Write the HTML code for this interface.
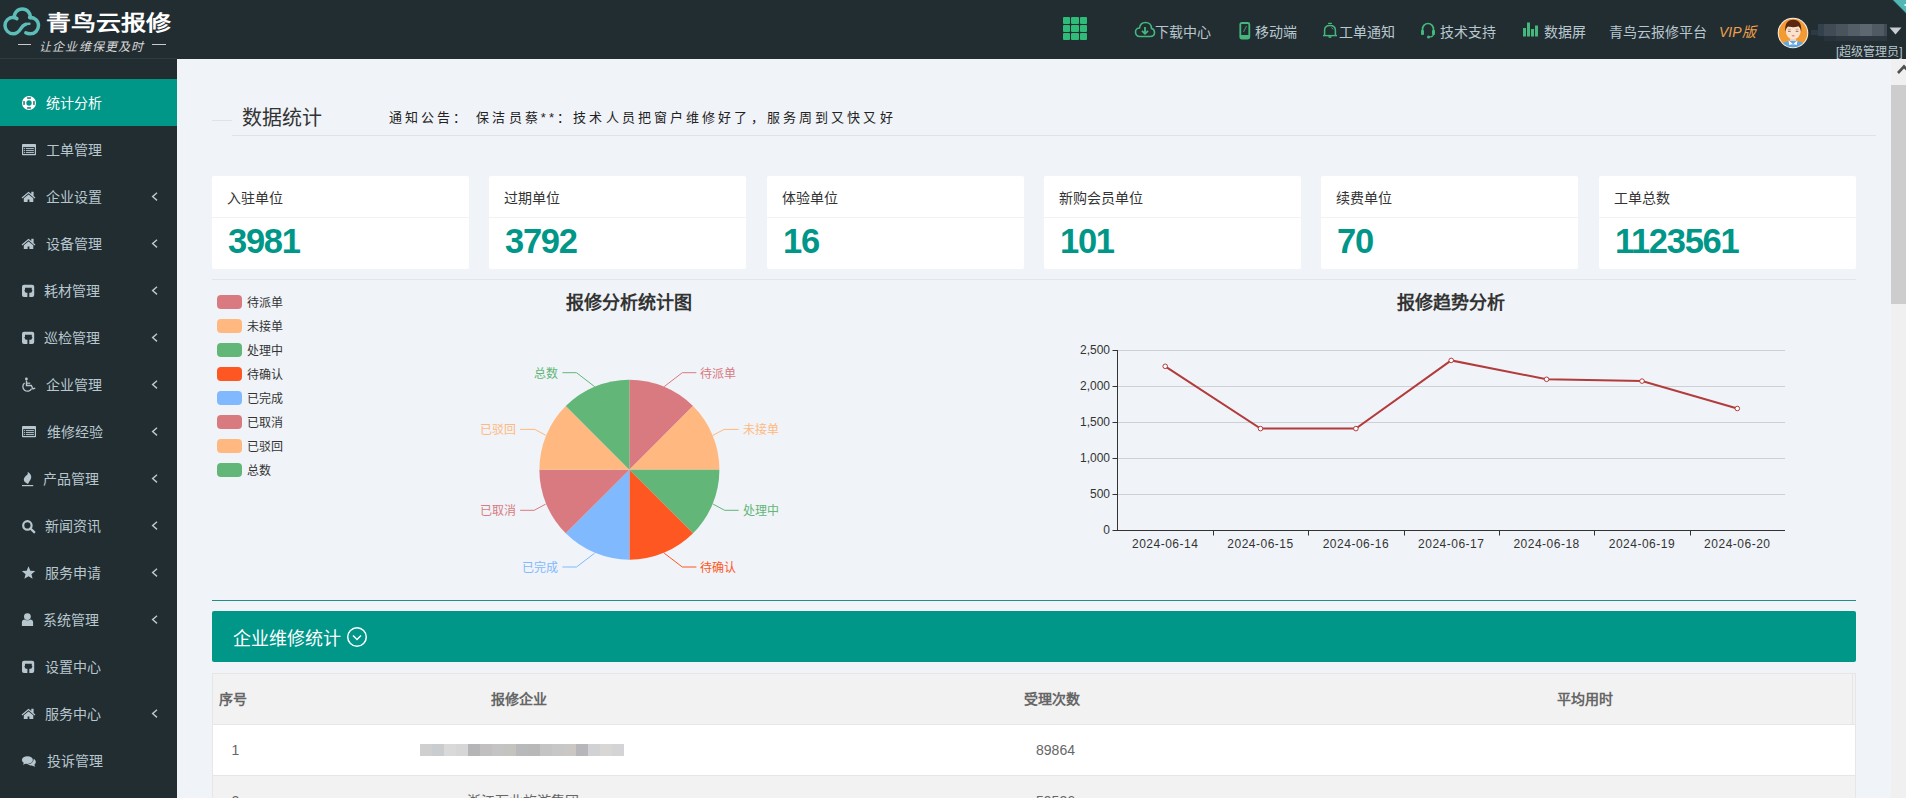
<!DOCTYPE html><html lang="zh-CN"><head><meta charset="utf-8"><style>
*{margin:0;padding:0;box-sizing:border-box}
html,body{width:1906px;height:798px;overflow:hidden;background:#f0f3f8;font-family:"Liberation Sans",sans-serif;}
div,span,svg{position:absolute}
.t{white-space:nowrap}
</style></head><body>
<div style="left:0px;top:0px;width:1906px;height:59px;background:#222d32;"></div>
<div style="left:0px;top:58px;width:177px;height:1px;background:#2f3b42;"></div>
<svg style="left:0;top:0" width="46" height="40" viewBox="0 0 46 40">
<path d="M15 17.4 C 14.5 17.3 13.9 17.2 13.3 17.2 A 8.3 8.3 0 0 0 5 25.5 A 8.3 8.3 0 0 0 13.3 33.8 C 17.5 33.8 19.3 31 20.8 28.6 C 22 26.6 23.5 25 25.5 24.3" fill="none" stroke="#5cbdb9" stroke-width="3.5" stroke-linecap="round"/><path d="M24.5 24.6 C 26 24 27.5 23.8 29.5 23.8" fill="none" stroke="#5cbdb9" stroke-width="2.4" stroke-linecap="round"/>
<path d="M16.9 18.6 C 15.8 18 15 17.9 14.35 17.8 A 8 8 0 1 1 30.25 17.8" fill="none" stroke="#5cbdb9" stroke-width="3.5" stroke-linecap="round"/>
<path d="M29.6 17.4 A 8.3 8.3 0 0 1 38.5 25.6 A 8.2 8.2 0 0 1 30.3 33.8 C 28.5 33.8 27 33.5 25.8 32.8" fill="none" stroke="#5cbdb9" stroke-width="3.5" stroke-linecap="round"/>
</svg>
<div class="t" style="left:46px;top:6.5px;font-size:25px;line-height:30px;color:#fff;font-weight:bold;transform:scaleY(0.84);transform-origin:0 50%">青鸟云报修</div>
<div style="left:18px;top:44px;width:13px;height:1px;background:#c9c9c9;"></div>
<div style="left:152px;top:44px;width:14px;height:1px;background:#c9c9c9;"></div>
<div class="t" style="left:39px;top:39.5px;font-size:12px;line-height:14px;color:#d8d8d8;font-weight:normal;letter-spacing:1.2px;font-weight:300;font-style:italic">让企业维保更及时</div>
<div style="left:1062.5px;top:16.5px;width:7.5px;height:7px;background:#2fbb78;border-radius:1px"></div>
<div style="left:1071.0px;top:16.5px;width:7.5px;height:7px;background:#2fbb78;border-radius:1px"></div>
<div style="left:1079.5px;top:16.5px;width:7.5px;height:7px;background:#2fbb78;border-radius:1px"></div>
<div style="left:1062.5px;top:24.5px;width:7.5px;height:7px;background:#2fbb78;border-radius:1px"></div>
<div style="left:1071.0px;top:24.5px;width:7.5px;height:7px;background:#2fbb78;border-radius:1px"></div>
<div style="left:1079.5px;top:24.5px;width:7.5px;height:7px;background:#2fbb78;border-radius:1px"></div>
<div style="left:1062.5px;top:32.5px;width:7.5px;height:7px;background:#2fbb78;border-radius:1px"></div>
<div style="left:1071.0px;top:32.5px;width:7.5px;height:7px;background:#2fbb78;border-radius:1px"></div>
<div style="left:1079.5px;top:32.5px;width:7.5px;height:7px;background:#2fbb78;border-radius:1px"></div>
<svg style="left:1134px;top:21px" width="22" height="18" viewBox="0 0 22 18">
<path d="M6 15.5 C 3 15.5 1.5 13.5 1.5 11 C 1.5 8.5 3.5 7 5.5 7 C 6 3.5 8.5 1.5 11.5 1.5 C 15 1.5 17.5 4 17.5 7.5 C 19.5 7.8 20.5 9.5 20.5 11.5 C 20.5 13.8 19 15.5 16 15.5 Z" fill="none" stroke="#44b87c" stroke-width="1.6"/>
<path d="M11 6 V 12.5 M8 9.8 L11 12.8 L14 9.8" fill="none" stroke="#44b87c" stroke-width="1.8"/>
</svg>
<div class="t" style="left:1155px;top:22.0px;font-size:14px;line-height:20px;color:#b8c7ce;font-weight:normal;">下载中心</div>
<svg style="left:1239px;top:22px" width="13" height="18" viewBox="0 0 13 18">
<rect x="1.3" y="1" width="9" height="15.5" rx="1.5" fill="none" stroke="#44b87c" stroke-width="1.8"/>
<rect x="1.3" y="13" width="9" height="3.5" fill="#44b87c"/>
<path d="M7.5 4 L4.5 10" stroke="#44b87c" stroke-width="0.8"/>
</svg>
<div class="t" style="left:1255px;top:22.0px;font-size:14px;line-height:20px;color:#b8c7ce;font-weight:normal;">移动端</div>
<svg style="left:1322px;top:22px" width="16" height="17" viewBox="0 0 16 17">
<rect x="6" y="0.8" width="4" height="1.3" rx="0.6" fill="#44b87c"/>
<path d="M2.6 13 V8.2 C 2.6 4.8 4.8 3.4 8 3.4 C 11.2 3.4 13.4 4.8 13.4 8.2 V13" fill="none" stroke="#44b87c" stroke-width="1.5"/>
<path d="M1 13.6 H15" stroke="#44b87c" stroke-width="1.4"/>
<path d="M6.2 14.2 A 1.8 1.8 0 0 0 9.8 14.2 Z" fill="#44b87c"/>
<path d="M9.6 5.6 L11.2 7.4" stroke="#44b87c" stroke-width="0.9"/>
</svg>
<div class="t" style="left:1339px;top:22.0px;font-size:14px;line-height:20px;color:#b8c7ce;font-weight:normal;">工单通知</div>
<svg style="left:1420px;top:22px" width="17" height="17" viewBox="0 0 17 17">
<path d="M2.5 10 V 7.5 C 2.5 4 5 1.5 8 1.5 C 11 1.5 13.5 4 13.5 7.5 V 10" fill="none" stroke="#44b87c" stroke-width="1.7"/>
<rect x="1" y="8" width="3" height="5" rx="1" fill="#44b87c"/>
<rect x="12" y="8" width="3" height="5" rx="1" fill="#44b87c"/>
<path d="M13.5 12.5 C 13 14.5 11 15 9 15" fill="none" stroke="#44b87c" stroke-width="1.2"/>
<circle cx="8.5" cy="15" r="1.5" fill="#44b87c"/>
</svg>
<div class="t" style="left:1439.5px;top:22.0px;font-size:14px;line-height:20px;color:#b8c7ce;font-weight:normal;">技术支持</div>
<svg style="left:1523px;top:22px" width="16" height="15" viewBox="0 0 16 15">
<rect x="0" y="6" width="3" height="8.5" fill="#44b87c"/>
<rect x="4" y="0.5" width="3" height="14" fill="#44b87c"/>
<rect x="8" y="7" width="3" height="7.5" fill="#44b87c"/>
<rect x="12" y="3.5" width="3" height="11" fill="#44b87c"/>
</svg>
<div class="t" style="left:1543.5px;top:22.0px;font-size:14px;line-height:20px;color:#b8c7ce;font-weight:normal;">数据屏</div>
<div class="t" style="left:1609px;top:22.0px;font-size:14px;line-height:20px;color:#b8c7ce;font-weight:normal;">青鸟云报修平台</div>
<div class="t" style="left:1719px;top:22.0px;font-size:14px;line-height:20px;color:#f0a04b;font-weight:normal;font-style:italic">VIP版</div>
<svg style="left:1777px;top:17px" width="32" height="32" viewBox="0 0 32 32">
<defs><clipPath id="av"><circle cx="16" cy="16" r="14.3"/></clipPath></defs>
<circle cx="16" cy="16" r="15.3" fill="#f4f1ee"/>
<g clip-path="url(#av)">
<rect x="0" y="0" width="32" height="32" fill="#f39a33"/>
<path d="M3 32 C 4 26 9 23.5 16 23.5 C 23 23.5 28 26 29 32 Z" fill="#5ea7e4"/>
<rect x="13" y="18" width="6" height="6" fill="#f3cfb4"/>
<path d="M11.5 23.2 L16 27.2 L20.5 23.2 L19.8 28 L16 27 L12.2 28 Z" fill="#fff"/>
<ellipse cx="16.2" cy="14.5" rx="7.4" ry="7.8" fill="#fbe2cd"/>
<path d="M8.3 15 C 7.5 7 10.5 2.8 16.2 2.8 C 22 2.8 25 7 24.2 15 C 23.8 12.5 23 10.5 21.5 9.3 C 18 10.5 13.5 10.3 11 9.5 C 9.5 10.8 8.7 12.5 8.3 15 Z" fill="#5a2810"/>
<path d="M10.8 12.3 H 13.8 M18.6 12.3 H 21.6" stroke="#b08f78" stroke-width="0.7"/>
<path d="M11 14.3 H 13.7 M18.7 14.3 H 21.4" stroke="#6b4a3a" stroke-width="0.8"/>
<ellipse cx="16.2" cy="18.8" rx="1.6" ry="0.7" fill="#e88080"/>
</g>
</svg>
<div style="left:1811px;top:30px;width:7px;height:5px;background:#2d3944;"></div>
<div style="left:1818px;top:24px;width:6px;height:12px;background:#33414d;"></div>
<div style="left:1824px;top:24px;width:12px;height:12px;background:#414b55;"></div>
<div style="left:1836px;top:24px;width:12px;height:12px;background:#4a545c;"></div>
<div style="left:1848px;top:24px;width:12px;height:12px;background:#545e67;"></div>
<div style="left:1860px;top:24px;width:12px;height:12px;background:#5d6770;"></div>
<div style="left:1872px;top:24px;width:12px;height:12px;background:#505a62;"></div>
<div style="left:1884px;top:24px;width:3px;height:12px;background:#414b53;"></div>
<div style="left:1824px;top:36px;width:12px;height:5px;background:#27323a;"></div>
<div style="left:1836px;top:36px;width:51px;height:5px;background:#2b363e;"></div>
<svg style="left:1889px;top:27px" width="13" height="8" viewBox="0 0 13 8"><path d="M0.5 0.5 H 12.5 L 6.5 7.5 Z" fill="#c8cdd1"/></svg>
<div class="t" style="left:1836px;top:44.5px;font-size:12px;line-height:14px;color:#b8c7ce;font-weight:normal;">[超级管理员]</div>
<svg style="left:1890px;top:0" width="16" height="16" viewBox="0 0 16 16"><path d="M2.5 0 H 16 V 13.5 Z" fill="#52b6b3"/><path d="M2.5 0 L 16 13.5" stroke="#15383a" stroke-width="0.8"/><rect x="14.5" y="4" width="1.5" height="2" fill="#c8fff8"/></svg>
<div style="left:0px;top:59px;width:177px;height:739px;background:#222d32;"></div>
<div style="left:0px;top:79px;width:177px;height:47px;background:#009688;"></div>
<svg style="left:0;top:91px" width="60" height="24" viewBox="0 91 60 24"><circle cx="29" cy="103" r="7" fill="#fff"/><circle cx="29" cy="103" r="2.7" fill="#009688"/><rect x="27.1" y="97.3" width="3.8" height="1.5" fill="#2c6f6a"/><rect x="27.1" y="107.2" width="3.8" height="1.5" fill="#2c6f6a"/><rect x="23.3" y="101.1" width="1.5" height="3.8" fill="#2c6f6a"/><rect x="33.2" y="101.1" width="1.5" height="3.8" fill="#2c6f6a"/></svg>
<div class="t" style="left:46px;top:93.0px;font-size:14px;line-height:20px;color:#fff;font-weight:normal;">统计分析</div>
<svg style="left:0;top:138px" width="60" height="24" viewBox="0 138 60 24"><rect x="22" y="144" width="14" height="11.3" rx="0.8" fill="#b8c7ce"/><rect x="23.2" y="147.1" width="11.6" height="6.9" fill="#222d32"/><circle cx="24.5" cy="148.6" r="0.65" fill="#b8c7ce"/><rect x="25.9" y="148.1" width="8" height="1" fill="#b8c7ce"/><circle cx="24.5" cy="150.6" r="0.65" fill="#b8c7ce"/><rect x="25.9" y="150.1" width="8" height="1" fill="#b8c7ce"/><circle cx="24.5" cy="152.6" r="0.65" fill="#b8c7ce"/><rect x="25.9" y="152.1" width="8" height="1" fill="#b8c7ce"/></svg>
<div class="t" style="left:46px;top:140.0px;font-size:14px;line-height:20px;color:#b8c7ce;font-weight:normal;">工单管理</div>
<svg style="left:0;top:185px" width="60" height="24" viewBox="0 185 60 24"><path d="M21.6 197.6 L28.5 191.7 L31.3 194.1 V191.8 H33.6 V196.1 L35.4 197.6 L34.6 198.4 L28.5 193.3 L22.4 198.4 Z" fill="#b8c7ce"/><path d="M23.8 198.2 L28.5 194.4 L33.3 198.2 V202 H29.4 V199.5 H27.6 V202 H23.8 Z" fill="#b8c7ce"/></svg>
<div class="t" style="left:45.5px;top:187.0px;font-size:14px;line-height:20px;color:#b8c7ce;font-weight:normal;">企业设置</div>
<svg style="left:151px;top:191px" width="8" height="12" viewBox="0 0 8 12"><path d="M6 1.8 L1.6 5.6 L6 9.4" fill="none" stroke="#b8c7ce" stroke-width="1.4"/></svg>
<svg style="left:0;top:232px" width="60" height="24" viewBox="0 232 60 24"><path d="M21.6 244.6 L28.5 238.7 L31.3 241.1 V238.8 H33.6 V243.1 L35.4 244.6 L34.6 245.4 L28.5 240.3 L22.4 245.4 Z" fill="#b8c7ce"/><path d="M23.8 245.2 L28.5 241.4 L33.3 245.2 V249 H29.4 V246.5 H27.6 V249 H23.8 Z" fill="#b8c7ce"/></svg>
<div class="t" style="left:45.5px;top:234.0px;font-size:14px;line-height:20px;color:#b8c7ce;font-weight:normal;">设备管理</div>
<svg style="left:151px;top:238px" width="8" height="12" viewBox="0 0 8 12"><path d="M6 1.8 L1.6 5.6 L6 9.4" fill="none" stroke="#b8c7ce" stroke-width="1.4"/></svg>
<svg style="left:0;top:279px" width="60" height="24" viewBox="0 279 60 24"><rect x="22" y="284.7" width="12.2" height="12.3" rx="2" fill="#b8c7ce"/><path d="M25 287.7 H31.8 V289.7 L32.5 290.59999999999997 L31.8 291.5 V292.2 C 31 292.7 30 292.7 29.3 292.8 V297.0 H27.4 V292.8 C 26.8 292.7 25.8 292.7 25 292.2 V291.5 L24.3 290.59999999999997 L25 289.7 Z" fill="#222d32"/></svg>
<div class="t" style="left:44px;top:281.0px;font-size:14px;line-height:20px;color:#b8c7ce;font-weight:normal;">耗材管理</div>
<svg style="left:151px;top:285px" width="8" height="12" viewBox="0 0 8 12"><path d="M6 1.8 L1.6 5.6 L6 9.4" fill="none" stroke="#b8c7ce" stroke-width="1.4"/></svg>
<svg style="left:0;top:326px" width="60" height="24" viewBox="0 326 60 24"><rect x="22" y="331.7" width="12.2" height="12.3" rx="2" fill="#b8c7ce"/><path d="M25 334.7 H31.8 V336.7 L32.5 337.59999999999997 L31.8 338.5 V339.2 C 31 339.7 30 339.7 29.3 339.8 V344.0 H27.4 V339.8 C 26.8 339.7 25.8 339.7 25 339.2 V338.5 L24.3 337.59999999999997 L25 336.7 Z" fill="#222d32"/></svg>
<div class="t" style="left:44px;top:328.0px;font-size:14px;line-height:20px;color:#b8c7ce;font-weight:normal;">巡检管理</div>
<svg style="left:151px;top:332px" width="8" height="12" viewBox="0 0 8 12"><path d="M6 1.8 L1.6 5.6 L6 9.4" fill="none" stroke="#b8c7ce" stroke-width="1.4"/></svg>
<svg style="left:0;top:373px" width="60" height="24" viewBox="0 373 60 24"><circle cx="26.4" cy="379" r="1.4" fill="#b8c7ce"/><path d="M26.5 380.5 V385.5 H31.3 L33 389 L35.2 388.2" fill="none" stroke="#b8c7ce" stroke-width="1.4"/><path d="M26.5 383.2 H30.2" stroke="#b8c7ce" stroke-width="1.2"/><path d="M24.6 383 A 4.6 4.6 0 1 0 31.6 388.6" fill="none" stroke="#b8c7ce" stroke-width="1.3"/></svg>
<div class="t" style="left:45.5px;top:375.0px;font-size:14px;line-height:20px;color:#b8c7ce;font-weight:normal;">企业管理</div>
<svg style="left:151px;top:379px" width="8" height="12" viewBox="0 0 8 12"><path d="M6 1.8 L1.6 5.6 L6 9.4" fill="none" stroke="#b8c7ce" stroke-width="1.4"/></svg>
<svg style="left:0;top:420px" width="60" height="24" viewBox="0 420 60 24"><rect x="22" y="426" width="14" height="11.3" rx="0.8" fill="#b8c7ce"/><rect x="23.2" y="429.1" width="11.6" height="6.9" fill="#222d32"/><circle cx="24.5" cy="430.6" r="0.65" fill="#b8c7ce"/><rect x="25.9" y="430.1" width="8" height="1" fill="#b8c7ce"/><circle cx="24.5" cy="432.6" r="0.65" fill="#b8c7ce"/><rect x="25.9" y="432.1" width="8" height="1" fill="#b8c7ce"/><circle cx="24.5" cy="434.6" r="0.65" fill="#b8c7ce"/><rect x="25.9" y="434.1" width="8" height="1" fill="#b8c7ce"/></svg>
<div class="t" style="left:46.5px;top:422.0px;font-size:14px;line-height:20px;color:#b8c7ce;font-weight:normal;">维修经验</div>
<svg style="left:151px;top:426px" width="8" height="12" viewBox="0 0 8 12"><path d="M6 1.8 L1.6 5.6 L6 9.4" fill="none" stroke="#b8c7ce" stroke-width="1.4"/></svg>
<svg style="left:0;top:467px" width="60" height="24" viewBox="0 467 60 24"><path d="M27.6 471.8 C 30.2 473.4 31.6 475.4 31.2 477.8 C 30.9 479.9 29 481.4 28 484 C 25.4 483 23.8 481.6 23.8 479.6 C 23.8 477.6 25.6 476 27 475 C 28 474.2 28 473 27.6 471.8 Z" fill="#b8c7ce"/><rect x="22" y="485" width="11.2" height="1.2" fill="#b8c7ce"/></svg>
<div class="t" style="left:43px;top:469.0px;font-size:14px;line-height:20px;color:#b8c7ce;font-weight:normal;">产品管理</div>
<svg style="left:151px;top:473px" width="8" height="12" viewBox="0 0 8 12"><path d="M6 1.8 L1.6 5.6 L6 9.4" fill="none" stroke="#b8c7ce" stroke-width="1.4"/></svg>
<svg style="left:0;top:514px" width="60" height="24" viewBox="0 514 60 24"><circle cx="27.4" cy="525.4" r="4.2" fill="none" stroke="#b8c7ce" stroke-width="2.2"/><path d="M30.4 528.5 L34.2 532.2" stroke="#b8c7ce" stroke-width="2.4" stroke-linecap="round"/></svg>
<div class="t" style="left:45px;top:516.0px;font-size:14px;line-height:20px;color:#b8c7ce;font-weight:normal;">新闻资讯</div>
<svg style="left:151px;top:520px" width="8" height="12" viewBox="0 0 8 12"><path d="M6 1.8 L1.6 5.6 L6 9.4" fill="none" stroke="#b8c7ce" stroke-width="1.4"/></svg>
<svg style="left:0;top:561px" width="60" height="24" viewBox="0 561 60 24"><polygon points="28.50,566.20 30.32,570.69 35.16,571.04 31.45,574.16 32.61,578.86 28.50,576.30 24.39,578.86 25.55,574.16 21.84,571.04 26.68,570.69" fill="#b8c7ce"/></svg>
<div class="t" style="left:45px;top:563.0px;font-size:14px;line-height:20px;color:#b8c7ce;font-weight:normal;">服务申请</div>
<svg style="left:151px;top:567px" width="8" height="12" viewBox="0 0 8 12"><path d="M6 1.8 L1.6 5.6 L6 9.4" fill="none" stroke="#b8c7ce" stroke-width="1.4"/></svg>
<svg style="left:0;top:608px" width="60" height="24" viewBox="0 608 60 24"><circle cx="27.4" cy="616.6" r="3.4" fill="#b8c7ce"/><path d="M21.9 626 V622.2 C 21.9 620.3 23.2 619.4 24.8 619.4 C 26.4 620.6 28.4 620.6 30.2 619.4 C 31.8 619.4 33.1 620.3 33.1 622.2 V626 Z" fill="#b8c7ce"/></svg>
<div class="t" style="left:43px;top:610.0px;font-size:14px;line-height:20px;color:#b8c7ce;font-weight:normal;">系统管理</div>
<svg style="left:151px;top:614px" width="8" height="12" viewBox="0 0 8 12"><path d="M6 1.8 L1.6 5.6 L6 9.4" fill="none" stroke="#b8c7ce" stroke-width="1.4"/></svg>
<svg style="left:0;top:655px" width="60" height="24" viewBox="0 655 60 24"><rect x="22" y="660.7" width="12.2" height="12.3" rx="2" fill="#b8c7ce"/><path d="M25 663.7 H31.8 V665.7 L32.5 666.6 L31.8 667.5 V668.2 C 31 668.7 30 668.7 29.3 668.8000000000001 V673.0 H27.4 V668.8000000000001 C 26.8 668.7 25.8 668.7 25 668.2 V667.5 L24.3 666.6 L25 665.7 Z" fill="#222d32"/></svg>
<div class="t" style="left:44.5px;top:657.0px;font-size:14px;line-height:20px;color:#b8c7ce;font-weight:normal;">设置中心</div>
<svg style="left:0;top:702px" width="60" height="24" viewBox="0 702 60 24"><path d="M21.6 714.6 L28.5 708.7 L31.3 711.1 V708.8 H33.6 V713.1 L35.4 714.6 L34.6 715.4 L28.5 710.3 L22.4 715.4 Z" fill="#b8c7ce"/><path d="M23.8 715.2 L28.5 711.4 L33.3 715.2 V719 H29.4 V716.5 H27.6 V719 H23.8 Z" fill="#b8c7ce"/></svg>
<div class="t" style="left:45px;top:704.0px;font-size:14px;line-height:20px;color:#b8c7ce;font-weight:normal;">服务中心</div>
<svg style="left:151px;top:708px" width="8" height="12" viewBox="0 0 8 12"><path d="M6 1.8 L1.6 5.6 L6 9.4" fill="none" stroke="#b8c7ce" stroke-width="1.4"/></svg>
<svg style="left:0;top:749px" width="60" height="24" viewBox="0 749 60 24"><ellipse cx="27.4" cy="760.1" rx="5.5" ry="3.9" fill="#b8c7ce"/><path d="M24 762.8 L22.8 764.8 L26.5 763.6 Z" fill="#b8c7ce"/><path d="M33.8 758.8 C 35.5 759.8 36.2 761.5 35.6 763 C 35.2 764 34.6 764.5 34.2 764.8 L35.4 766.8 L31.6 765.4 C 30 765.6 28.4 765.2 27.3 764.6 C 30.5 764.4 33.5 762.6 33.8 758.8 Z" fill="#b8c7ce"/></svg>
<div class="t" style="left:46.5px;top:751.0px;font-size:14px;line-height:20px;color:#b8c7ce;font-weight:normal;">投诉管理</div>
<div style="left:177px;top:59px;width:1714px;height:739px;background:#f0f3f8;"></div>
<div style="left:212px;top:120px;width:20px;height:1px;background:#dfe3e8;"></div>
<div style="left:232px;top:135px;width:1644px;height:1px;background:#dfe3e8;"></div>
<div class="t" style="left:242px;top:105.0px;font-size:20px;line-height:26px;color:#333;font-weight:normal;">数据统计</div>
<div class="t" style="left:389px;top:108.5px;font-size:13px;line-height:18px;color:#222;font-weight:normal;letter-spacing:3.12px">通知公告：&nbsp;保洁员蔡**：技术人员把窗户维修好了，服务周到又快又好</div>
<div style="left:212px;top:176px;width:257px;height:93px;background:#fff;border-radius:2px"></div>
<div style="left:212px;top:217px;width:257px;height:1px;background:#f2f2f2;"></div>
<div class="t" style="left:227px;top:188.0px;font-size:14px;line-height:20px;color:#333;font-weight:normal;">入驻单位</div>
<div class="t" style="left:228px;top:220.5px;font-size:34.5px;line-height:40px;color:#009688;font-weight:bold;letter-spacing:-1.3px">3981</div>
<div style="left:489px;top:176px;width:257px;height:93px;background:#fff;border-radius:2px"></div>
<div style="left:489px;top:217px;width:257px;height:1px;background:#f2f2f2;"></div>
<div class="t" style="left:504px;top:188.0px;font-size:14px;line-height:20px;color:#333;font-weight:normal;">过期单位</div>
<div class="t" style="left:505px;top:220.5px;font-size:34.5px;line-height:40px;color:#009688;font-weight:bold;letter-spacing:-1.3px">3792</div>
<div style="left:767px;top:176px;width:257px;height:93px;background:#fff;border-radius:2px"></div>
<div style="left:767px;top:217px;width:257px;height:1px;background:#f2f2f2;"></div>
<div class="t" style="left:782px;top:188.0px;font-size:14px;line-height:20px;color:#333;font-weight:normal;">体验单位</div>
<div class="t" style="left:783px;top:220.5px;font-size:34.5px;line-height:40px;color:#009688;font-weight:bold;letter-spacing:-1.3px">16</div>
<div style="left:1044px;top:176px;width:257px;height:93px;background:#fff;border-radius:2px"></div>
<div style="left:1044px;top:217px;width:257px;height:1px;background:#f2f2f2;"></div>
<div class="t" style="left:1059px;top:188.0px;font-size:14px;line-height:20px;color:#333;font-weight:normal;">新购会员单位</div>
<div class="t" style="left:1060px;top:220.5px;font-size:34.5px;line-height:40px;color:#009688;font-weight:bold;letter-spacing:-1.3px">101</div>
<div style="left:1321px;top:176px;width:257px;height:93px;background:#fff;border-radius:2px"></div>
<div style="left:1321px;top:217px;width:257px;height:1px;background:#f2f2f2;"></div>
<div class="t" style="left:1336px;top:188.0px;font-size:14px;line-height:20px;color:#333;font-weight:normal;">续费单位</div>
<div class="t" style="left:1337px;top:220.5px;font-size:34.5px;line-height:40px;color:#009688;font-weight:bold;letter-spacing:-1.3px">70</div>
<div style="left:1599px;top:176px;width:257px;height:93px;background:#fff;border-radius:2px"></div>
<div style="left:1599px;top:217px;width:257px;height:1px;background:#f2f2f2;"></div>
<div class="t" style="left:1614px;top:188.0px;font-size:14px;line-height:20px;color:#333;font-weight:normal;">工单总数</div>
<div class="t" style="left:1615px;top:220.5px;font-size:34.5px;line-height:40px;color:#009688;font-weight:bold;letter-spacing:-1.3px">1123561</div>
<div style="left:212px;top:279px;width:1644px;height:1px;background:#e2e6ea;"></div>
<svg style="left:0;top:0" width="1906" height="798" viewBox="0 0 1906 798"><path d="M629.4 469.7 L629.40 379.70 A90 90 0 0 1 693.04 406.06 Z" fill="#d87a80" stroke="none"/><path d="M629.4 469.7 L693.04 406.06 A90 90 0 0 1 719.40 469.70 Z" fill="#ffb980" stroke="none"/><path d="M629.4 469.7 L719.40 469.70 A90 90 0 0 1 693.04 533.34 Z" fill="#62b677" stroke="none"/><path d="M629.4 469.7 L693.04 533.34 A90 90 0 0 1 629.40 559.70 Z" fill="#ff5722" stroke="none"/><path d="M629.4 469.7 L629.40 559.70 A90 90 0 0 1 565.76 533.34 Z" fill="#81b9fe" stroke="none"/><path d="M629.4 469.7 L565.76 533.34 A90 90 0 0 1 539.40 469.70 Z" fill="#d87a80" stroke="none"/><path d="M629.4 469.7 L539.40 469.70 A90 90 0 0 1 565.76 406.06 Z" fill="#ffb980" stroke="none"/><path d="M629.4 469.7 L565.76 406.06 A90 90 0 0 1 629.40 379.70 Z" fill="#62b677" stroke="none"/><polyline points="664.2,386.6 682.3,372.7 696.4,372.7" fill="none" stroke="#d87a80" stroke-width="1"/><polyline points="713.0,435.3 724.0,429.4 738.7,429.4" fill="none" stroke="#ffb980" stroke-width="1"/><polyline points="713.1,504.1 724.6,510.3 738.7,510.3" fill="none" stroke="#62b677" stroke-width="1"/><polyline points="664.2,553.2 682.3,567.0 696.4,567.0" fill="none" stroke="#ff5722" stroke-width="1"/><polyline points="594.6,553.2 576.5,567.0 562.4,567.0" fill="none" stroke="#81b9fe" stroke-width="1"/><polyline points="545.7,504.1 534.2,510.3 520.1,510.3" fill="none" stroke="#d87a80" stroke-width="1"/><polyline points="545.8,435.3 534.8,429.4 520.1,429.4" fill="none" stroke="#ffb980" stroke-width="1"/><polyline points="594.6,386.6 576.5,372.7 562.4,372.7" fill="none" stroke="#62b677" stroke-width="1"/></svg>
<div class="t" style="left:700.4px;top:365.5px;font-size:12px;line-height:16px;color:#d87a80;font-weight:normal;">待派单</div>
<div class="t" style="left:742.7px;top:422.2px;font-size:12px;line-height:16px;color:#ffb980;font-weight:normal;">未接单</div>
<div class="t" style="left:742.7px;top:503.1px;font-size:12px;line-height:16px;color:#62b677;font-weight:normal;">处理中</div>
<div class="t" style="left:700.4px;top:559.8px;font-size:12px;line-height:16px;color:#ff5722;font-weight:normal;">待确认</div>
<div class="t" style="left:358.4px;width:200px;text-align:right;top:559.8px;font-size:12px;line-height:16px;color:#81b9fe">已完成</div>
<div class="t" style="left:316.0999999999999px;width:200px;text-align:right;top:503.1px;font-size:12px;line-height:16px;color:#d87a80">已取消</div>
<div class="t" style="left:316.0999999999999px;width:200px;text-align:right;top:422.2px;font-size:12px;line-height:16px;color:#ffb980">已驳回</div>
<div class="t" style="left:358.4px;width:200px;text-align:right;top:365.5px;font-size:12px;line-height:16px;color:#62b677">总数</div>
<div class="t" style="left:429.4px;width:400px;text-align:center;top:291.0px;font-size:18px;line-height:24px;color:#333;font-weight:bold;">报修分析统计图</div>
<div style="left:217px;top:295px;width:25px;height:14px;background:#d87a80;border-radius:4px"></div>
<div class="t" style="left:247px;top:295.0px;font-size:12px;line-height:16px;color:#333;font-weight:normal;">待派单</div>
<div style="left:217px;top:319px;width:25px;height:14px;background:#ffb980;border-radius:4px"></div>
<div class="t" style="left:247px;top:319.0px;font-size:12px;line-height:16px;color:#333;font-weight:normal;">未接单</div>
<div style="left:217px;top:343px;width:25px;height:14px;background:#62b677;border-radius:4px"></div>
<div class="t" style="left:247px;top:343.0px;font-size:12px;line-height:16px;color:#333;font-weight:normal;">处理中</div>
<div style="left:217px;top:367px;width:25px;height:14px;background:#ff5722;border-radius:4px"></div>
<div class="t" style="left:247px;top:367.0px;font-size:12px;line-height:16px;color:#333;font-weight:normal;">待确认</div>
<div style="left:217px;top:391px;width:25px;height:14px;background:#81b9fe;border-radius:4px"></div>
<div class="t" style="left:247px;top:391.0px;font-size:12px;line-height:16px;color:#333;font-weight:normal;">已完成</div>
<div style="left:217px;top:415px;width:25px;height:14px;background:#d87a80;border-radius:4px"></div>
<div class="t" style="left:247px;top:415.0px;font-size:12px;line-height:16px;color:#333;font-weight:normal;">已取消</div>
<div style="left:217px;top:439px;width:25px;height:14px;background:#ffb980;border-radius:4px"></div>
<div class="t" style="left:247px;top:439.0px;font-size:12px;line-height:16px;color:#333;font-weight:normal;">已驳回</div>
<div style="left:217px;top:463px;width:25px;height:14px;background:#62b677;border-radius:4px"></div>
<div class="t" style="left:247px;top:463.0px;font-size:12px;line-height:16px;color:#333;font-weight:normal;">总数</div>
<div class="t" style="left:1251.0px;width:400px;text-align:center;top:291.0px;font-size:18px;line-height:24px;color:#333;font-weight:bold;">报修趋势分析</div>
<svg style="left:0;top:0" width="1906" height="798" viewBox="0 0 1906 798"><line x1="1117.5" y1="494.5" x2="1785" y2="494.5" stroke="#cdd0d5" stroke-width="1"/><line x1="1117.5" y1="458.5" x2="1785" y2="458.5" stroke="#cdd0d5" stroke-width="1"/><line x1="1117.5" y1="422.5" x2="1785" y2="422.5" stroke="#cdd0d5" stroke-width="1"/><line x1="1117.5" y1="386.5" x2="1785" y2="386.5" stroke="#cdd0d5" stroke-width="1"/><line x1="1117.5" y1="350.5" x2="1785" y2="350.5" stroke="#cdd0d5" stroke-width="1"/><line x1="1112.5" y1="530.5" x2="1117.5" y2="530.5" stroke="#333" stroke-width="1"/><line x1="1112.5" y1="494.5" x2="1117.5" y2="494.5" stroke="#333" stroke-width="1"/><line x1="1112.5" y1="458.5" x2="1117.5" y2="458.5" stroke="#333" stroke-width="1"/><line x1="1112.5" y1="422.5" x2="1117.5" y2="422.5" stroke="#333" stroke-width="1"/><line x1="1112.5" y1="386.5" x2="1117.5" y2="386.5" stroke="#333" stroke-width="1"/><line x1="1112.5" y1="350.5" x2="1117.5" y2="350.5" stroke="#333" stroke-width="1"/><line x1="1117.5" y1="350" x2="1117.5" y2="531" stroke="#333" stroke-width="1"/><line x1="1117.5" y1="530.5" x2="1785" y2="530.5" stroke="#333" stroke-width="1"/><line x1="1213.5" y1="530" x2="1213.5" y2="535.5" stroke="#333" stroke-width="1"/><line x1="1308.5" y1="530" x2="1308.5" y2="535.5" stroke="#333" stroke-width="1"/><line x1="1404.5" y1="530" x2="1404.5" y2="535.5" stroke="#333" stroke-width="1"/><line x1="1499.5" y1="530" x2="1499.5" y2="535.5" stroke="#333" stroke-width="1"/><line x1="1594.5" y1="530" x2="1594.5" y2="535.5" stroke="#333" stroke-width="1"/><line x1="1690.5" y1="530" x2="1690.5" y2="535.5" stroke="#333" stroke-width="1"/><polyline points="1165.2,366.3 1260.5,428.6 1355.9,428.6 1451.2,360.4 1546.6,379.3 1642.0,381.1 1737.3,408.5" fill="none" stroke="#b23b3b" stroke-width="2"/><circle cx="1165.2" cy="366.3" r="2.3" fill="#fff" stroke="#b23b3b" stroke-width="1"/><circle cx="1260.5" cy="428.6" r="2.3" fill="#fff" stroke="#b23b3b" stroke-width="1"/><circle cx="1355.9" cy="428.6" r="2.3" fill="#fff" stroke="#b23b3b" stroke-width="1"/><circle cx="1451.2" cy="360.4" r="2.3" fill="#fff" stroke="#b23b3b" stroke-width="1"/><circle cx="1546.6" cy="379.3" r="2.3" fill="#fff" stroke="#b23b3b" stroke-width="1"/><circle cx="1642.0" cy="381.1" r="2.3" fill="#fff" stroke="#b23b3b" stroke-width="1"/><circle cx="1737.3" cy="408.5" r="2.3" fill="#fff" stroke="#b23b3b" stroke-width="1"/></svg>
<div class="t" style="left:1010px;width:100px;text-align:right;top:522px;font-size:12px;line-height:16px;color:#333">0</div>
<div class="t" style="left:1010px;width:100px;text-align:right;top:486px;font-size:12px;line-height:16px;color:#333">500</div>
<div class="t" style="left:1010px;width:100px;text-align:right;top:450px;font-size:12px;line-height:16px;color:#333">1,000</div>
<div class="t" style="left:1010px;width:100px;text-align:right;top:414px;font-size:12px;line-height:16px;color:#333">1,500</div>
<div class="t" style="left:1010px;width:100px;text-align:right;top:378px;font-size:12px;line-height:16px;color:#333">2,000</div>
<div class="t" style="left:1010px;width:100px;text-align:right;top:342px;font-size:12px;line-height:16px;color:#333">2,500</div>
<div class="t" style="left:1120.1785714285713px;width:90px;text-align:center;top:535.5px;font-size:12px;line-height:16px;color:#333;font-weight:normal;letter-spacing:0.5px">2024-06-14</div>
<div class="t" style="left:1215.5357142857142px;width:90px;text-align:center;top:535.5px;font-size:12px;line-height:16px;color:#333;font-weight:normal;letter-spacing:0.5px">2024-06-15</div>
<div class="t" style="left:1310.892857142857px;width:90px;text-align:center;top:535.5px;font-size:12px;line-height:16px;color:#333;font-weight:normal;letter-spacing:0.5px">2024-06-16</div>
<div class="t" style="left:1406.25px;width:90px;text-align:center;top:535.5px;font-size:12px;line-height:16px;color:#333;font-weight:normal;letter-spacing:0.5px">2024-06-17</div>
<div class="t" style="left:1501.607142857143px;width:90px;text-align:center;top:535.5px;font-size:12px;line-height:16px;color:#333;font-weight:normal;letter-spacing:0.5px">2024-06-18</div>
<div class="t" style="left:1596.9642857142858px;width:90px;text-align:center;top:535.5px;font-size:12px;line-height:16px;color:#333;font-weight:normal;letter-spacing:0.5px">2024-06-19</div>
<div class="t" style="left:1692.3214285714284px;width:90px;text-align:center;top:535.5px;font-size:12px;line-height:16px;color:#333;font-weight:normal;letter-spacing:0.5px">2024-06-20</div>
<div style="left:212px;top:600px;width:1644px;height:1px;background:#1d8f87;"></div>
<div style="left:212px;top:611px;width:1644px;height:51px;background:#009688;border-radius:2px"></div>
<div class="t" style="left:232.5px;top:626.5px;font-size:18px;line-height:24px;color:#fff;font-weight:normal;">企业维修统计</div>
<svg style="left:346px;top:626px" width="22" height="22" viewBox="0 0 22 22"><circle cx="11" cy="11" r="9.3" fill="none" stroke="#fff" stroke-width="1.5"/><path d="M7 9.5 L11 13.5 L15 9.5" fill="none" stroke="#fff" stroke-width="1.5"/></svg>
<div style="left:212px;top:673px;width:1644px;height:1px;background:#e6e6e6;"></div>
<div style="left:212px;top:674px;width:1644px;height:51px;background:#f2f2f2;"></div>
<div style="left:212px;top:724px;width:1644px;height:1px;background:#e6e6e6;"></div>
<div style="left:212px;top:725px;width:1644px;height:50px;background:#ffffff;"></div>
<div style="left:212px;top:775px;width:1644px;height:1px;background:#e6e6e6;"></div>
<div style="left:212px;top:776px;width:1644px;height:22px;background:#f2f2f2;"></div>
<div style="left:212px;top:673px;width:1px;height:125px;background:#e6e6e6;"></div>
<div style="left:1855px;top:673px;width:1px;height:125px;background:#e6e6e6;"></div>
<div style="left:1852px;top:674px;width:1px;height:50px;background:#e6e6e6;"></div>
<div class="t" style="left:219px;top:688.5px;font-size:14px;line-height:20px;color:#666;font-weight:bold;">序号</div>
<div class="t" style="left:419.0px;width:200px;text-align:center;top:688.5px;font-size:14px;line-height:20px;color:#666;font-weight:bold;">报修企业</div>
<div class="t" style="left:952.0px;width:200px;text-align:center;top:688.5px;font-size:14px;line-height:20px;color:#666;font-weight:bold;">受理次数</div>
<div class="t" style="left:1485.0px;width:200px;text-align:center;top:688.5px;font-size:14px;line-height:20px;color:#666;font-weight:bold;">平均用时</div>
<div class="t" style="left:231.5px;top:739.5px;font-size:14px;line-height:20px;color:#666;font-weight:normal;">1</div>
<div class="t" style="left:955.5px;width:200px;text-align:center;top:739.5px;font-size:14px;line-height:20px;color:#666;font-weight:normal;">89864</div>
<div style="left:420px;top:744px;width:12px;height:12px;background:#cfcfcf;"></div>
<div style="left:432px;top:744px;width:12px;height:12px;background:#c9cdcf;"></div>
<div style="left:444px;top:744px;width:12px;height:12px;background:#d9d9d9;"></div>
<div style="left:456px;top:744px;width:12px;height:12px;background:#d6d6d6;"></div>
<div style="left:468px;top:744px;width:12px;height:12px;background:#b5b5b7;"></div>
<div style="left:480px;top:744px;width:12px;height:12px;background:#c1bfc0;"></div>
<div style="left:492px;top:744px;width:12px;height:12px;background:#c5c4c4;"></div>
<div style="left:504px;top:744px;width:12px;height:12px;background:#c4c3bf;"></div>
<div style="left:516px;top:744px;width:12px;height:12px;background:#b8b9bb;"></div>
<div style="left:528px;top:744px;width:12px;height:12px;background:#b8b8b8;"></div>
<div style="left:540px;top:744px;width:12px;height:12px;background:#c4c4c4;"></div>
<div style="left:552px;top:744px;width:12px;height:12px;background:#c7c7c7;"></div>
<div style="left:564px;top:744px;width:12px;height:12px;background:#cbc7c5;"></div>
<div style="left:576px;top:744px;width:12px;height:12px;background:#b7b6bb;"></div>
<div style="left:588px;top:744px;width:12px;height:12px;background:#d1d2d4;"></div>
<div style="left:600px;top:744px;width:12px;height:12px;background:#d8d7d6;"></div>
<div style="left:612px;top:744px;width:12px;height:12px;background:#d4d4d6;"></div>
<div class="t" style="left:231.5px;top:791.0px;font-size:14px;line-height:20px;color:#666;font-weight:normal;">2</div>
<div class="t" style="left:467px;top:791.0px;font-size:14px;line-height:20px;color:#666;font-weight:normal;">浙江万业旅游集团</div>
<div class="t" style="left:955.5px;width:200px;text-align:center;top:791.0px;font-size:14px;line-height:20px;color:#666;font-weight:normal;">59536</div>
<div style="left:1891px;top:59px;width:15px;height:739px;background:#f0f0f0;"></div>
<div style="left:1891px;top:85px;width:15px;height:219px;background:#cdcdcd;"></div>
<svg style="left:1891px;top:59px" width="15" height="20" viewBox="0 0 15 20"><path d="M7 14 L13 7.5 L19 14" fill="none" stroke="#505050" stroke-width="2.6"/></svg>
</body></html>
